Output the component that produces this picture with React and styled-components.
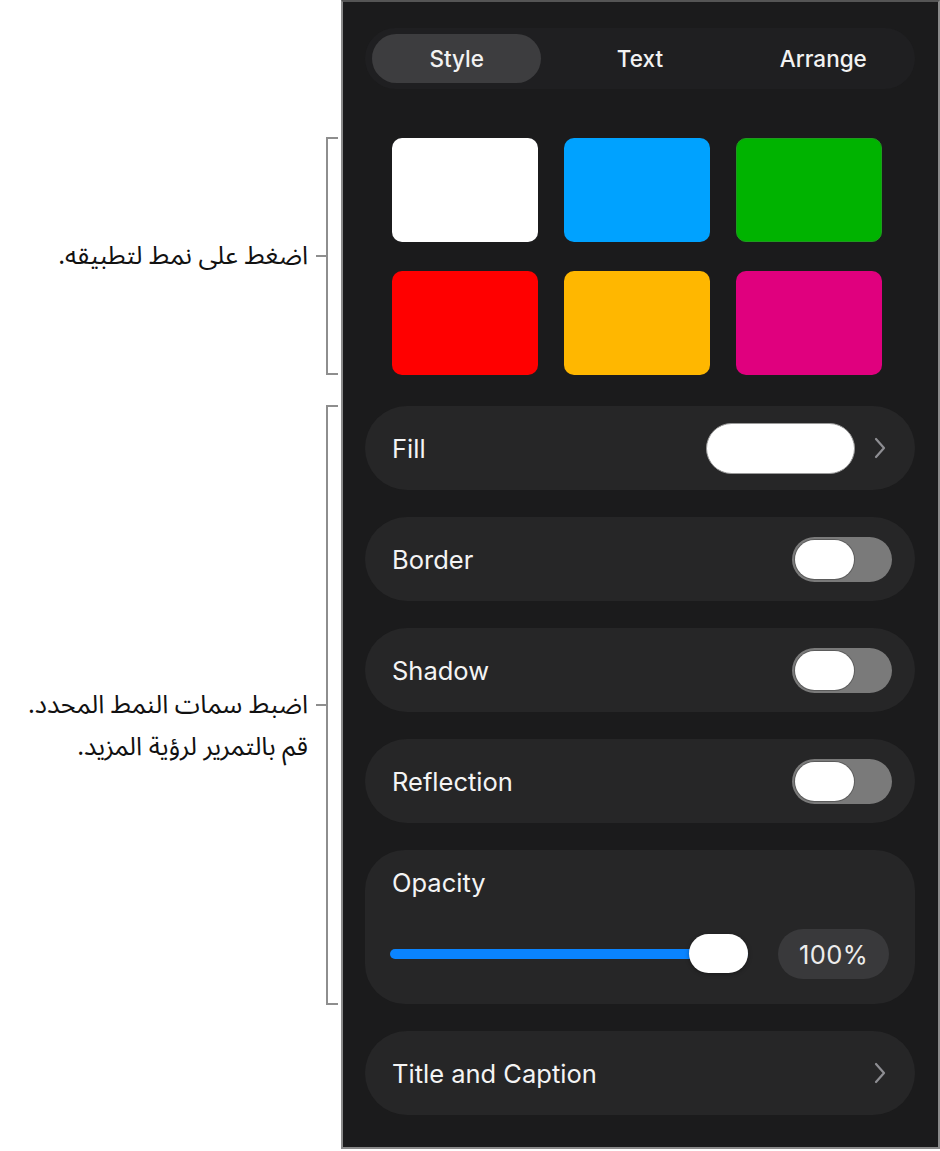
import React, { useState } from 'react';
import styled, { createGlobalStyle } from 'styled-components';

const GlobalStyle = createGlobalStyle`
  html, body {
    margin: 0;
    padding: 0;
    background: #ffffff;
  }
  * {
    box-sizing: border-box;
  }
`;

const Page = styled.div`
  display: flex;
  width: 940px;
  height: 1151px;
  background: #ffffff;
`;

/* left side: arabic callouts with brackets */
const Notes = styled.div`
  width: 341px;
  display: flex;
  flex-direction: column;
  align-items: flex-end;
  gap: 30px;
  padding: 137px 3px 0 0;
`;

const Callout = styled.div`
  display: flex;
  align-items: center;
  height: ${(p) => p.$height}px;
`;

const NoteText = styled.div`
  direction: rtl;
  text-align: right;
  font-family: "Noto Sans Arabic", "DejaVu Sans", sans-serif;
  font-size: 25.5px;
  line-height: 42px;
  color: #111111;
  margin-right: 8px;
  margin-top: ${(p) => (p.$lines - 1) * 42}px;
  white-space: nowrap;
`;

const Tick = styled.div`
  width: 10px;
  height: 2px;
  background: #8e8e8e;
`;

const Bracket = styled.div`
  width: 12px;
  height: 100%;
  border: 2px solid #8e8e8e;
  border-right: none;
`;

/* right side: the inspector panel */
const Panel = styled.div`
  width: 599px;
  height: 1149px;
  background: #1b1b1c;
  border: 2px solid #8a8a8a;
  border-top-color: #555;
  padding: 26px 23px 0 22px;
  display: flex;
  flex-direction: column;
  font-family: Inter, "Liberation Sans", sans-serif;
  color: #f4f4f4;
`;

const Segments = styled.div`
  display: grid;
  grid-template-columns: repeat(3, 1fr);
  height: 61px;
  border-radius: 31px;
  background: #1f1f21;
  padding: 6px 0;
`;

const Segment = styled.button`
  border: none;
  margin: 0 7px;
  border-radius: 25px;
  background: ${(p) => (p.$active ? '#3d3d3f' : 'transparent')};
  color: #f2f2f2;
  font-family: inherit;
  font-size: 22.5px;
  font-weight: 500;
  cursor: pointer;
`;

const Swatches = styled.div`
  display: grid;
  grid-template-columns: repeat(3, 146px);
  grid-auto-rows: 104px;
  column-gap: 26px;
  row-gap: 29px;
  padding-left: 27px;
  margin: 49px 0 31px;
`;

const Swatch = styled.div`
  border-radius: 10px;
  background: ${(p) => p.$color};
  border: 1px solid ${(p) => p.$edge || 'transparent'};
`;

const Rows = styled.div`
  display: flex;
  flex-direction: column;
  gap: 27px;
`;

const Row = styled.div`
  display: flex;
  align-items: center;
  justify-content: space-between;
  height: 84px;
  flex-shrink: 0;
  border-radius: 42px;
  background: #262627;
  padding: 0 ${(p) => p.$right || 28}px 0 27px;
`;

const Label = styled.span`
  font-size: 25.5px;
  color: #f4f4f4;
`;

const Right = styled.div`
  display: flex;
  align-items: center;
  gap: 18px;
`;

const FillPill = styled.div`
  width: 149px;
  height: 51px;
  border-radius: 26px;
  background: #ffffff;
  border: 1.5px solid #9a9a9a;
`;

const Toggle = styled.div`
  width: 100px;
  height: 45px;
  border-radius: 23px;
  background: #7a7a7a;
  padding: 3px;
  display: flex;
  justify-content: ${(p) => (p.$on ? 'flex-end' : 'flex-start')};
`;

const Knob = styled.div`
  width: 59px;
  height: 39px;
  border-radius: 20px;
  background: #ffffff;
  box-shadow: 0 0 0 1px rgba(0, 0, 0, 0.25);
`;

const Card = styled.div`
  border-radius: 40px;
  background: #262627;
  padding: 18px 26px 25px 25px;
  display: flex;
  flex-direction: column;
  gap: 31px;
`;

const CardTitle = styled.div`
  font-size: 25.5px;
  line-height: 30px;
  padding-left: 2px;
`;

const SliderRow = styled.div`
  display: flex;
  align-items: center;
  justify-content: space-between;
  height: 50px;
`;

const Track = styled.div`
  position: relative;
  width: 358px;
  height: 10px;
  border-radius: 5px;
  background: #0a84ff;
`;

const Thumb = styled.div`
  position: absolute;
  right: 0;
  top: -15px;
  width: 59px;
  height: 39px;
  border-radius: 20px;
  background: #ffffff;
  box-shadow: 0 1px 4px rgba(0, 0, 0, 0.35);
`;

const Value = styled.div`
  width: 111px;
  height: 50px;
  border-radius: 25px;
  background: #39393b;
  display: flex;
  align-items: center;
  justify-content: center;
  font-size: 25.5px;
  letter-spacing: 0.4px;
  color: #ececec;
`;

const Chevron = () => (
  <svg width="14" height="22" viewBox="0 0 14 22" fill="none">
    <polyline
      points="3,2 11,11 3,20"
      stroke="#8e8e93"
      strokeWidth="2.2"
      strokeLinecap="round"
      strokeLinejoin="round"
    />
  </svg>
);

const swatches = [
  { color: '#ffffff' },
  { color: '#00a2ff' },
  { color: '#00b300', edge: '#1f9a1f' },
  { color: '#ff0000' },
  { color: '#ffb700' },
  { color: '#e0007e' },
];

const App = () => {
  const [tab, setTab] = useState('Style');
  const toggles = ['Border', 'Shadow', 'Reflection'];

  return (
    <>
      <GlobalStyle />
      <Page>
        <Notes>
          <Callout $height={238}>
            <NoteText $lines={1}>اضغط على نمط لتطبيقه.</NoteText>
            <Tick />
            <Bracket />
          </Callout>
          <Callout $height={600}>
            <NoteText $lines={2}>
              اضبط سمات النمط المحدد.
              <br />
              قم بالتمرير لرؤية المزيد.
            </NoteText>
            <Tick />
            <Bracket />
          </Callout>
        </Notes>

        <Panel>
          <Segments>
            {['Style', 'Text', 'Arrange'].map((t) => (
              <Segment key={t} $active={tab === t} onClick={() => setTab(t)}>
                {t}
              </Segment>
            ))}
          </Segments>

          <Swatches>
            {swatches.map((s, i) => (
              <Swatch key={i} $color={s.color} $edge={s.edge} />
            ))}
          </Swatches>

          <Rows>
            <Row>
              <Label>Fill</Label>
              <Right>
                <FillPill />
                <Chevron />
              </Right>
            </Row>
            {toggles.map((t) => (
              <Row key={t} $right={23}>
                <Label>{t}</Label>
                <Toggle>
                  <Knob />
                </Toggle>
              </Row>
            ))}
            <Card>
              <CardTitle>Opacity</CardTitle>
              <SliderRow>
                <Track>
                  <Thumb />
                </Track>
                <Value>100%</Value>
              </SliderRow>
            </Card>
            <Row>
              <Label>Title and Caption</Label>
              <Chevron />
            </Row>
          </Rows>
        </Panel>
      </Page>
    </>
  );
};

export default App;
